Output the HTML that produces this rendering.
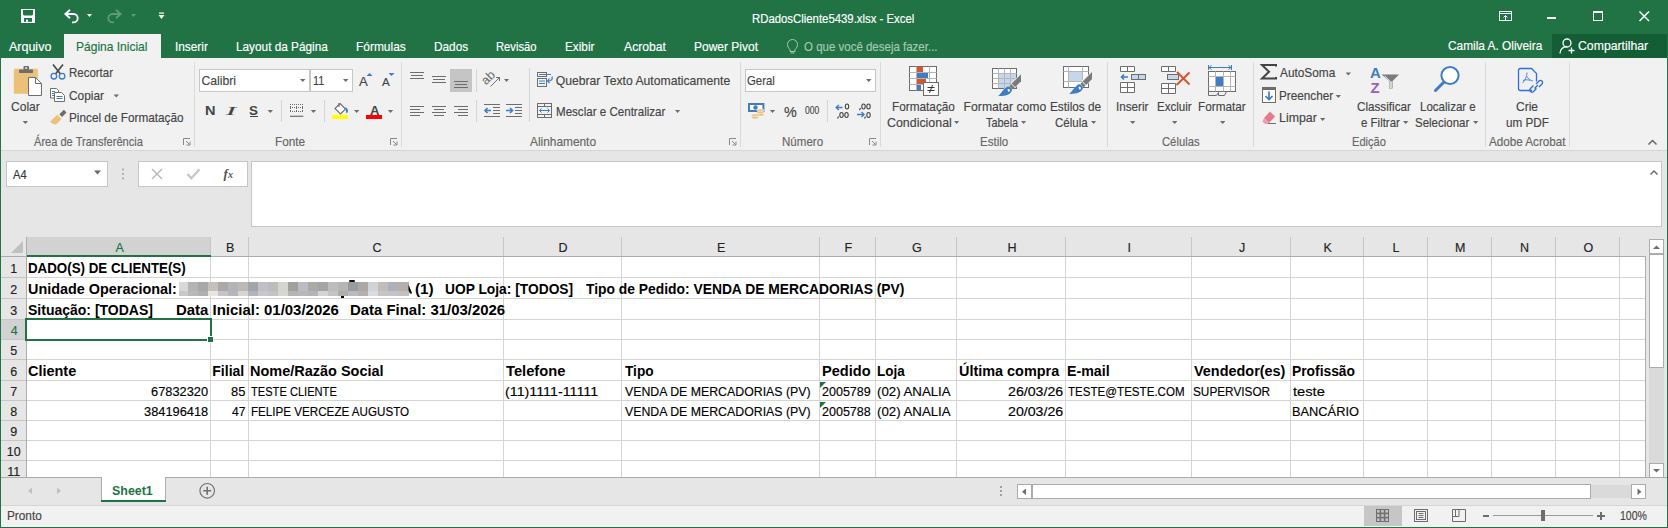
<!DOCTYPE html>
<html><head><meta charset="utf-8"><style>
html,body{margin:0;padding:0;width:1668px;height:528px;overflow:hidden;background:#fff;font-family:"Liberation Sans",sans-serif}
.t{position:absolute;line-height:20px;white-space:pre}
.n{-webkit-text-stroke:0.15px currentColor}
svg{overflow:visible}
</style></head><body>
<div style="position:absolute;left:0px;top:0px;width:1668px;height:58px;background:#217346;"></div>
<div style="position:absolute;left:64px;top:34px;width:97px;height:24px;background:#f1f1f1;"></div>
<div style="position:absolute;left:1552px;top:34px;width:115px;height:24px;background:#135e35;"></div>
<div style="position:absolute;left:0px;top:58px;width:1668px;height:92px;background:#f1f1f1;"></div>
<div style="position:absolute;left:0px;top:150px;width:1668px;height:1px;background:#d5d5d5;"></div>
<div style="position:absolute;left:0px;top:151px;width:1668px;height:86px;background:#e6e6e6;"></div>
<div style="position:absolute;left:6px;top:161px;width:102px;height:26px;background:#fff;box-sizing:border-box;border:1px solid #c6c6c6"></div>
<div style="position:absolute;left:138px;top:161px;width:110px;height:26px;background:#fff;box-sizing:border-box;border:1px solid #c6c6c6"></div>
<div style="position:absolute;left:251px;top:161px;width:1411px;height:66px;background:#fff;box-sizing:border-box;border:1px solid #c6c6c6"></div>
<div style="position:absolute;left:0px;top:237px;width:1668px;height:241px;background:#e6e6e6;"></div>
<div style="position:absolute;left:26px;top:256px;width:1619px;height:221px;background:#fff;"></div>
<div style="position:absolute;left:210px;top:257px;width:1px;height:220px;background:#d4d4d4;"></div>
<div style="position:absolute;left:210px;top:237px;width:1px;height:19px;background:#c6c6c6;"></div>
<div style="position:absolute;left:248px;top:257px;width:1px;height:220px;background:#d4d4d4;"></div>
<div style="position:absolute;left:248px;top:237px;width:1px;height:19px;background:#c6c6c6;"></div>
<div style="position:absolute;left:503px;top:257px;width:1px;height:220px;background:#d4d4d4;"></div>
<div style="position:absolute;left:503px;top:237px;width:1px;height:19px;background:#c6c6c6;"></div>
<div style="position:absolute;left:621px;top:257px;width:1px;height:220px;background:#d4d4d4;"></div>
<div style="position:absolute;left:621px;top:237px;width:1px;height:19px;background:#c6c6c6;"></div>
<div style="position:absolute;left:819px;top:257px;width:1px;height:220px;background:#d4d4d4;"></div>
<div style="position:absolute;left:819px;top:237px;width:1px;height:19px;background:#c6c6c6;"></div>
<div style="position:absolute;left:875px;top:257px;width:1px;height:220px;background:#d4d4d4;"></div>
<div style="position:absolute;left:875px;top:237px;width:1px;height:19px;background:#c6c6c6;"></div>
<div style="position:absolute;left:956px;top:257px;width:1px;height:220px;background:#d4d4d4;"></div>
<div style="position:absolute;left:956px;top:237px;width:1px;height:19px;background:#c6c6c6;"></div>
<div style="position:absolute;left:1065px;top:257px;width:1px;height:220px;background:#d4d4d4;"></div>
<div style="position:absolute;left:1065px;top:237px;width:1px;height:19px;background:#c6c6c6;"></div>
<div style="position:absolute;left:1191px;top:257px;width:1px;height:220px;background:#d4d4d4;"></div>
<div style="position:absolute;left:1191px;top:237px;width:1px;height:19px;background:#c6c6c6;"></div>
<div style="position:absolute;left:1290px;top:257px;width:1px;height:220px;background:#d4d4d4;"></div>
<div style="position:absolute;left:1290px;top:237px;width:1px;height:19px;background:#c6c6c6;"></div>
<div style="position:absolute;left:1363px;top:257px;width:1px;height:220px;background:#d4d4d4;"></div>
<div style="position:absolute;left:1363px;top:237px;width:1px;height:19px;background:#c6c6c6;"></div>
<div style="position:absolute;left:1427px;top:257px;width:1px;height:220px;background:#d4d4d4;"></div>
<div style="position:absolute;left:1427px;top:237px;width:1px;height:19px;background:#c6c6c6;"></div>
<div style="position:absolute;left:1491px;top:257px;width:1px;height:220px;background:#d4d4d4;"></div>
<div style="position:absolute;left:1491px;top:237px;width:1px;height:19px;background:#c6c6c6;"></div>
<div style="position:absolute;left:1555px;top:257px;width:1px;height:220px;background:#d4d4d4;"></div>
<div style="position:absolute;left:1555px;top:237px;width:1px;height:19px;background:#c6c6c6;"></div>
<div style="position:absolute;left:1619px;top:257px;width:1px;height:220px;background:#d4d4d4;"></div>
<div style="position:absolute;left:1619px;top:237px;width:1px;height:19px;background:#c6c6c6;"></div>
<div style="position:absolute;left:27px;top:277px;width:1618px;height:1px;background:#d4d4d4;"></div>
<div style="position:absolute;left:0px;top:277px;width:26px;height:1px;background:#c6c6c6;"></div>
<div style="position:absolute;left:27px;top:298px;width:1618px;height:1px;background:#d4d4d4;"></div>
<div style="position:absolute;left:0px;top:298px;width:26px;height:1px;background:#c6c6c6;"></div>
<div style="position:absolute;left:27px;top:319px;width:1618px;height:1px;background:#d4d4d4;"></div>
<div style="position:absolute;left:0px;top:319px;width:26px;height:1px;background:#c6c6c6;"></div>
<div style="position:absolute;left:27px;top:339px;width:1618px;height:1px;background:#d4d4d4;"></div>
<div style="position:absolute;left:0px;top:339px;width:26px;height:1px;background:#c6c6c6;"></div>
<div style="position:absolute;left:27px;top:359px;width:1618px;height:1px;background:#d4d4d4;"></div>
<div style="position:absolute;left:0px;top:359px;width:26px;height:1px;background:#c6c6c6;"></div>
<div style="position:absolute;left:27px;top:380px;width:1618px;height:1px;background:#d4d4d4;"></div>
<div style="position:absolute;left:0px;top:380px;width:26px;height:1px;background:#c6c6c6;"></div>
<div style="position:absolute;left:27px;top:400px;width:1618px;height:1px;background:#d4d4d4;"></div>
<div style="position:absolute;left:0px;top:400px;width:26px;height:1px;background:#c6c6c6;"></div>
<div style="position:absolute;left:27px;top:420px;width:1618px;height:1px;background:#d4d4d4;"></div>
<div style="position:absolute;left:0px;top:420px;width:26px;height:1px;background:#c6c6c6;"></div>
<div style="position:absolute;left:27px;top:440px;width:1618px;height:1px;background:#d4d4d4;"></div>
<div style="position:absolute;left:0px;top:440px;width:26px;height:1px;background:#c6c6c6;"></div>
<div style="position:absolute;left:27px;top:460px;width:1618px;height:1px;background:#d4d4d4;"></div>
<div style="position:absolute;left:0px;top:460px;width:26px;height:1px;background:#c6c6c6;"></div>
<div style="position:absolute;left:0px;top:256px;width:1645px;height:1px;background:#ababab;"></div>
<div style="position:absolute;left:26px;top:237px;width:1px;height:240px;background:#ababab;"></div>
<div style="position:absolute;left:1645px;top:256px;width:1px;height:222px;background:#ababab;"></div>
<div style="position:absolute;left:27px;top:237px;width:183px;height:18px;background:#d2d2d2;"></div>
<div style="position:absolute;left:27px;top:255px;width:184px;height:2px;background:#217346;"></div>
<div style="position:absolute;left:1px;top:320px;width:25px;height:19px;background:#d2d2d2;"></div>
<div style="position:absolute;left:26px;top:319px;width:1px;height:20px;background:#217346;"></div>
<div style="position:absolute;left:179px;top:282px;width:9px;height:9px;background:#d8d8d8;"></div>
<div style="position:absolute;left:179px;top:291px;width:9px;height:5px;background:#c8c8c8;"></div>
<div style="position:absolute;left:188px;top:282px;width:10px;height:9px;background:#b4b4b4;"></div>
<div style="position:absolute;left:188px;top:291px;width:10px;height:5px;background:#b8b8b8;"></div>
<div style="position:absolute;left:198px;top:282px;width:10px;height:9px;background:#a8a8a8;"></div>
<div style="position:absolute;left:198px;top:291px;width:10px;height:5px;background:#b0b0b0;"></div>
<div style="position:absolute;left:208px;top:282px;width:10px;height:9px;background:#c4c0bc;"></div>
<div style="position:absolute;left:208px;top:291px;width:10px;height:5px;background:#e8e4e0;"></div>
<div style="position:absolute;left:218px;top:282px;width:10px;height:9px;background:#aca8a8;"></div>
<div style="position:absolute;left:218px;top:291px;width:10px;height:5px;background:#c4c4c8;"></div>
<div style="position:absolute;left:228px;top:282px;width:10px;height:9px;background:#b4b4b8;"></div>
<div style="position:absolute;left:228px;top:291px;width:10px;height:5px;background:#b4b8bc;"></div>
<div style="position:absolute;left:238px;top:282px;width:10px;height:9px;background:#bcb8b4;"></div>
<div style="position:absolute;left:238px;top:291px;width:10px;height:5px;background:#d8d4d0;"></div>
<div style="position:absolute;left:248px;top:282px;width:10px;height:9px;background:#a0a4ac;"></div>
<div style="position:absolute;left:248px;top:291px;width:10px;height:5px;background:#b0b4bc;"></div>
<div style="position:absolute;left:258px;top:282px;width:10px;height:9px;background:#c0c0c4;"></div>
<div style="position:absolute;left:258px;top:291px;width:10px;height:5px;background:#c8c8c8;"></div>
<div style="position:absolute;left:268px;top:282px;width:10px;height:9px;background:#bcbcbc;"></div>
<div style="position:absolute;left:268px;top:291px;width:10px;height:5px;background:#c4c4c4;"></div>
<div style="position:absolute;left:278px;top:282px;width:10px;height:9px;background:#d4d4d0;"></div>
<div style="position:absolute;left:278px;top:291px;width:10px;height:5px;background:#d8d4d0;"></div>
<div style="position:absolute;left:288px;top:282px;width:10px;height:9px;background:#a0a09c;"></div>
<div style="position:absolute;left:288px;top:291px;width:10px;height:5px;background:#b4b4b4;"></div>
<div style="position:absolute;left:298px;top:282px;width:10px;height:9px;background:#b8bcc4;"></div>
<div style="position:absolute;left:298px;top:291px;width:10px;height:5px;background:#b8b8bc;"></div>
<div style="position:absolute;left:308px;top:282px;width:10px;height:9px;background:#aca8a4;"></div>
<div style="position:absolute;left:308px;top:291px;width:10px;height:5px;background:#b4b4b8;"></div>
<div style="position:absolute;left:318px;top:282px;width:10px;height:9px;background:#a4a4a8;"></div>
<div style="position:absolute;left:318px;top:291px;width:10px;height:5px;background:#d4d4d4;"></div>
<div style="position:absolute;left:328px;top:282px;width:10px;height:9px;background:#bcbcbc;"></div>
<div style="position:absolute;left:328px;top:291px;width:10px;height:5px;background:#c4c4c4;"></div>
<div style="position:absolute;left:338px;top:282px;width:10px;height:9px;background:#b8b4b4;"></div>
<div style="position:absolute;left:338px;top:291px;width:10px;height:5px;background:#b0aca8;"></div>
<div style="position:absolute;left:348px;top:282px;width:10px;height:9px;background:#989ca0;"></div>
<div style="position:absolute;left:348px;top:291px;width:10px;height:5px;background:#b8bcc0;"></div>
<div style="position:absolute;left:358px;top:282px;width:10px;height:9px;background:#aca8a8;"></div>
<div style="position:absolute;left:358px;top:291px;width:10px;height:5px;background:#b8b0b0;"></div>
<div style="position:absolute;left:368px;top:282px;width:10px;height:9px;background:#d0d4d8;"></div>
<div style="position:absolute;left:368px;top:291px;width:10px;height:5px;background:#d8dce0;"></div>
<div style="position:absolute;left:378px;top:282px;width:10px;height:9px;background:#c4bcb8;"></div>
<div style="position:absolute;left:378px;top:291px;width:10px;height:5px;background:#c8c4c4;"></div>
<div style="position:absolute;left:388px;top:282px;width:10px;height:9px;background:#b0b0b8;"></div>
<div style="position:absolute;left:388px;top:291px;width:10px;height:5px;background:#c4c4c8;"></div>
<div style="position:absolute;left:398px;top:282px;width:11px;height:9px;background:#b4b0ac;"></div>
<div style="position:absolute;left:398px;top:291px;width:11px;height:5px;background:#c4c0c0;"></div>
<svg style="position:absolute;left:405px;top:280px" width="10" height="18" viewBox="0 0 10 18"><path d="M3.5 4.5L7.2 13.5h-2.4L3.5 10z" fill="#000"/></svg>
<div style="position:absolute;left:349px;top:280.3px;width:6px;height:1.7px;background:#111;border-radius:1px"></div>
<div style="position:absolute;left:341px;top:296px;width:3px;height:1.5px;background:#000;"></div>
<svg style="position:absolute;left:820px;top:382px" width="6" height="6" viewBox="0 0 6 6"><path d="M0 0H6L0 6Z" fill="#1e7145"/></svg>
<svg style="position:absolute;left:820px;top:402px" width="6" height="6" viewBox="0 0 6 6"><path d="M0 0H6L0 6Z" fill="#1e7145"/></svg>
<div style="position:absolute;left:25px;top:318px;width:187px;height:2px;background:#217346;"></div>
<div style="position:absolute;left:25px;top:318px;width:2px;height:23px;background:#217346;"></div>
<div style="position:absolute;left:25px;top:339px;width:182px;height:2px;background:#217346;"></div>
<div style="position:absolute;left:210px;top:318px;width:2px;height:18px;background:#217346;"></div>
<div style="position:absolute;left:207px;top:336px;width:7px;height:7px;background:#fff;"></div>
<div style="position:absolute;left:208px;top:337px;width:5px;height:5px;background:#217346;"></div>
<div style="position:absolute;left:250px;top:116px;width:8px;height:1px;background:#444;"></div>
<div style="position:absolute;left:0px;top:477px;width:1668px;height:28px;background:#e6e6e6;"></div>
<div style="position:absolute;left:0px;top:477px;width:1668px;height:1px;background:#ababab;"></div>
<div style="position:absolute;left:0px;top:505px;width:1668px;height:23px;background:#f1f1f1;"></div>
<div style="position:absolute;left:0px;top:505px;width:1668px;height:1px;background:#d5d5d5;"></div>
<div style="position:absolute;left:0px;top:57px;width:1px;height:471px;background:#217346;"></div>
<div style="position:absolute;left:1667px;top:57px;width:1px;height:471px;background:#217346;"></div>
<div style="position:absolute;left:0px;top:527px;width:1668px;height:1px;background:#217346;"></div>
<svg style="position:absolute;left:0;top:0" width="1668" height="528"><rect x="21" y="9" width="14" height="14" fill="#fff"/><path d="M23 10h10v4.5l-1 1h-8l-1-1z" fill="#217346"/><rect x="24" y="18" width="8" height="3.8" fill="#217346"/><rect x="26" y="19.6" width="2" height="2.2" fill="#fff"/><path d="M66 14h7.5a4.2 4.2 0 0 1 0 8.4h-1.5" fill="none" stroke="#fff" stroke-width="1.9"/><path d="M70 9.8l-4.6 4.2 4.6 4.2" fill="none" stroke="#fff" stroke-width="1.9"/><path d="M87 14h5l-2.5 3z" fill="#fff"/><path d="M120 14h-7.5a4.2 4.2 0 0 0 0 8.4h1.5" fill="none" stroke="#5e9a76" stroke-width="1.9"/><path d="M116 9.8l4.6 4.2-4.6 4.2" fill="none" stroke="#5e9a76" stroke-width="1.9"/><path d="M131 14h5l-2.5 3z" fill="#5e9a76"/><rect x="159" y="12.5" width="5" height="1.2" fill="#fff"/><path d="M158.5 15h6l-3.0 4z" fill="#fff"/><rect x="1499.5" y="11.5" width="12" height="9" fill="none" stroke="#fff" stroke-width="1"/><path d="M1499.5 13.5h12" stroke="#fff" stroke-width="1"/><path d="M1505.5 21v-5M1503.5 17.5l2-2 2 2" fill="none" stroke="#fff" stroke-width="1"/><rect x="1547" y="17" width="9" height="2" fill="#fff"/><rect x="1593.5" y="11.5" width="9" height="9" fill="none" stroke="#fff" stroke-width="1"/><rect x="1593" y="11" width="10" height="2" fill="#fff"/><path d="M1639.5 11.5l9.5 9.5M1649 11.5l-9.5 9.5" stroke="#fff" stroke-width="1.5"/><path d="M790 49.5c-1.5-1.5-2.5-3-2.5-5a5 5 0 0 1 10 0c0 2-1 3.5-2.5 5v2h-5z" fill="none" stroke="#a6c9b4" stroke-width="1"/><path d="M790.5 53h4" stroke="#a6c9b4" stroke-width="1"/><circle cx="1567" cy="43" r="4" fill="none" stroke="#fff" stroke-width="1.3"/><path d="M1560 53.5c0-4 3-7 7-7" fill="none" stroke="#fff" stroke-width="1.3"/><path d="M1568.5 50.5h6M1571.5 47.5v6" stroke="#fff" stroke-width="1.3"/><rect x="13.8" y="68.8" width="24" height="25" rx="1" fill="#ebc17a"/><rect x="19" y="69.5" width="14" height="3.5" rx="0.8" fill="#6d6d6d"/><rect x="23.5" y="66" width="5.5" height="4" rx="1" fill="#6d6d6d"/><rect x="25.3" y="67.2" width="1.8" height="1.6" fill="#f3f3f3"/><path d="M28.5 77.5h7l6 6v12h-13z" fill="#fff" stroke="#6d6d6d" stroke-width="1"/><path d="M35.5 77.5v6h6" fill="none" stroke="#6d6d6d" stroke-width="1"/><path d="M53 64.5l7.5 9.5M63 64.5l-7.5 9.5" stroke="#505050" stroke-width="1.8"/><circle cx="53.9" cy="76.2" r="2.8" fill="none" stroke="#3e7cc4" stroke-width="1.3"/><circle cx="62.1" cy="76.2" r="2.8" fill="none" stroke="#3e7cc4" stroke-width="1.3"/><path d="M50.5 88.5h6l2 2v7.5h-8z" fill="#fff" stroke="#6d6d6d" stroke-width="1"/><path d="M54.5 92.5h7l3 3v6h-10z" fill="#fff" stroke="#6d6d6d" stroke-width="1"/><path d="M52 91.5h3M52 93.5h2M52 95.5h2M56.5 96.5h6M56.5 98.5h6" stroke="#3e7cc4" stroke-width="1"/><path d="M59.3 114.2l4.6-4.4 2.6 2.6-4.4 4.6z" fill="#6d6d6d"/><path d="M57.2 114.8l4.3 4.3-5.5 5.4c-2 0-4.5-1.2-6-2.8z" fill="#ebc17a"/><path d="M22.7 121h5.3l-2.65 3z" fill="#6d6d6d"/><path d="M113.6 94.5h5.4l-2.7 3z" fill="#6d6d6d"/><path d="M183.5 145v-6.5h6.5" fill="none" stroke="#888" stroke-width="1"/><path d="M186 141l3.5 3.5M186.5 145h3.5v-3.5" fill="none" stroke="#888" stroke-width="1"/><path d="M390.5 145v-6.5h6.5" fill="none" stroke="#888" stroke-width="1"/><path d="M393 141l3.5 3.5M393.5 145h3.5v-3.5" fill="none" stroke="#888" stroke-width="1"/><path d="M729.5 145v-6.5h6.5" fill="none" stroke="#888" stroke-width="1"/><path d="M732 141l3.5 3.5M732.5 145h3.5v-3.5" fill="none" stroke="#888" stroke-width="1"/><path d="M869.5 145v-6.5h6.5" fill="none" stroke="#888" stroke-width="1"/><path d="M872 141l3.5 3.5M872.5 145h3.5v-3.5" fill="none" stroke="#888" stroke-width="1"/><rect x="199.5" y="69.5" width="110" height="22" fill="#fff" stroke="#c6c6c6" stroke-width="1"/><rect x="310.5" y="69.5" width="42" height="22" fill="#fff" stroke="#c6c6c6" stroke-width="1"/><path d="M300 79h5.5l-2.75 3z" fill="#6d6d6d"/><path d="M343 79h5.5l-2.75 3z" fill="#6d6d6d"/><path d="M369.5 73l3 3h-6z" fill="#3e7cc4"/><path d="M388.5 73h6l-3 3z" fill="#3e7cc4"/><path d="M267.6 110h5.4l-2.7 3z" fill="#6d6d6d"/><path d="M310.8 110h5.4l-2.7 3z" fill="#6d6d6d"/><path d="M354 110h5.4l-2.7 3z" fill="#6d6d6d"/><path d="M387.8 110h5.4l-2.7 3z" fill="#6d6d6d"/><rect x="281" y="100" width="1" height="22" fill="#d5d5d5"/><rect x="324" y="100" width="1" height="22" fill="#d5d5d5"/><rect x="290" y="104" width="1" height="1" fill="#6d6d6d"/><rect x="290" y="111" width="1" height="1" fill="#6d6d6d"/><rect x="292" y="104" width="1" height="1" fill="#6d6d6d"/><rect x="292" y="111" width="1" height="1" fill="#6d6d6d"/><rect x="294" y="104" width="1" height="1" fill="#6d6d6d"/><rect x="294" y="111" width="1" height="1" fill="#6d6d6d"/><rect x="296" y="104" width="1" height="1" fill="#6d6d6d"/><rect x="296" y="111" width="1" height="1" fill="#6d6d6d"/><rect x="298" y="104" width="1" height="1" fill="#6d6d6d"/><rect x="298" y="111" width="1" height="1" fill="#6d6d6d"/><rect x="300" y="104" width="1" height="1" fill="#6d6d6d"/><rect x="300" y="111" width="1" height="1" fill="#6d6d6d"/><rect x="302" y="104" width="1" height="1" fill="#6d6d6d"/><rect x="302" y="111" width="1" height="1" fill="#6d6d6d"/><rect x="290" y="104" width="1" height="1" fill="#6d6d6d"/><rect x="296" y="104" width="1" height="1" fill="#6d6d6d"/><rect x="302" y="104" width="1" height="1" fill="#6d6d6d"/><rect x="290" y="106" width="1" height="1" fill="#6d6d6d"/><rect x="296" y="106" width="1" height="1" fill="#6d6d6d"/><rect x="302" y="106" width="1" height="1" fill="#6d6d6d"/><rect x="290" y="108" width="1" height="1" fill="#6d6d6d"/><rect x="296" y="108" width="1" height="1" fill="#6d6d6d"/><rect x="302" y="108" width="1" height="1" fill="#6d6d6d"/><rect x="290" y="110" width="1" height="1" fill="#6d6d6d"/><rect x="296" y="110" width="1" height="1" fill="#6d6d6d"/><rect x="302" y="110" width="1" height="1" fill="#6d6d6d"/><rect x="290" y="107" width="1" height="1" fill="#6d6d6d"/><rect x="292" y="107" width="1" height="1" fill="#6d6d6d"/><rect x="294" y="107" width="1" height="1" fill="#6d6d6d"/><rect x="296" y="107" width="1" height="1" fill="#6d6d6d"/><rect x="298" y="107" width="1" height="1" fill="#6d6d6d"/><rect x="300" y="107" width="1" height="1" fill="#6d6d6d"/><rect x="302" y="107" width="1" height="1" fill="#6d6d6d"/><rect x="290" y="115.7" width="13.3" height="1.2" fill="#6d6d6d"/><path d="M340 103.5l5.5 5.5-5 5-5.5-5.5z" fill="#fff" stroke="#6d6d6d" stroke-width="1.1"/><path d="M339 103v4" stroke="#6d6d6d" stroke-width="1.2"/><path d="M345.5 107c1.5 1 2.5 2.5 2.5 4c0 1.5-1 2-1.7 2c-0.3-1.5-0.5-3-0.8-6z" fill="#3e7cc4"/><rect x="332" y="115" width="16" height="4" fill="#ffff00"/><rect x="366" y="115" width="16" height="4" fill="#ff0000"/><rect x="410" y="72" width="14" height="1" fill="#6d6d6d"/><rect x="411" y="75" width="12" height="1" fill="#6d6d6d"/><rect x="410" y="78" width="14" height="1" fill="#6d6d6d"/><rect x="432" y="76" width="14" height="1" fill="#6d6d6d"/><rect x="433" y="79" width="12" height="1" fill="#6d6d6d"/><rect x="432" y="82" width="14" height="1" fill="#6d6d6d"/><rect x="450" y="69" width="22" height="23" fill="#c5c5c5"/><rect x="454" y="81" width="14" height="1" fill="#6d6d6d"/><rect x="455" y="84" width="12" height="1" fill="#6d6d6d"/><rect x="454" y="87" width="14" height="1" fill="#6d6d6d"/><rect x="410" y="106" width="14" height="1" fill="#6d6d6d"/><rect x="410" y="109" width="10" height="1" fill="#6d6d6d"/><rect x="410" y="112" width="14" height="1" fill="#6d6d6d"/><rect x="410" y="115" width="10" height="1" fill="#6d6d6d"/><rect x="432" y="106" width="14" height="1" fill="#6d6d6d"/><rect x="434" y="109" width="10" height="1" fill="#6d6d6d"/><rect x="432" y="112" width="14" height="1" fill="#6d6d6d"/><rect x="434" y="115" width="10" height="1" fill="#6d6d6d"/><rect x="454" y="106" width="14" height="1" fill="#6d6d6d"/><rect x="458" y="109" width="10" height="1" fill="#6d6d6d"/><rect x="454" y="112" width="14" height="1" fill="#6d6d6d"/><rect x="458" y="115" width="10" height="1" fill="#6d6d6d"/><rect x="476" y="69" width="1" height="23" fill="#d5d5d5"/><rect x="476" y="100" width="1" height="22" fill="#d5d5d5"/><rect x="529" y="68" width="1" height="54" fill="#d5d5d5"/><text x="0" y="0" transform="translate(486 85.5) rotate(-45)" font-family="Liberation Sans" font-size="12.5" fill="#6d6d6d">ab</text><path d="M490.5 86.5l9-9M496 77.5h3.5v3.5" fill="none" stroke="#6d6d6d" stroke-width="1"/><path d="M504 79h5l-2.5 3z" fill="#6d6d6d"/><rect x="484" y="104" width="16" height="1" fill="#6d6d6d"/><rect x="493" y="107" width="7" height="1" fill="#6d6d6d"/><rect x="493" y="110" width="7" height="1" fill="#6d6d6d"/><rect x="493" y="113" width="7" height="1" fill="#6d6d6d"/><rect x="484" y="116" width="16" height="1" fill="#6d6d6d"/><path d="M491 110.5h-6M487.5 108l-2.5 2.5 2.5 2.5" fill="none" stroke="#3e7cc4" stroke-width="1.6"/><rect x="506" y="104" width="16" height="1" fill="#6d6d6d"/><rect x="515" y="107" width="7" height="1" fill="#6d6d6d"/><rect x="515" y="110" width="7" height="1" fill="#6d6d6d"/><rect x="515" y="113" width="7" height="1" fill="#6d6d6d"/><rect x="506" y="116" width="16" height="1" fill="#6d6d6d"/><path d="M506 110.5h6M510 108l2.5 2.5-2.5 2.5" fill="none" stroke="#3e7cc4" stroke-width="1.6"/><rect x="537.5" y="72.5" width="9" height="4" fill="none" stroke="#6d6d6d" stroke-width="1"/><rect x="537.5" y="78.5" width="9" height="8" fill="none" stroke="#6d6d6d" stroke-width="1"/><path d="M539 74.5h12M539 81h6M539 83.5h6" stroke="#3e7cc4" stroke-width="1"/><path d="M552 76.5c1 3-1 4.5-4 4.5M549.5 78.5l-2 2.5 2 2" fill="none" stroke="#3e7cc4" stroke-width="1.2"/><rect x="537.5" y="103.5" width="14" height="14" fill="none" stroke="#6d6d6d" stroke-width="1"/><path d="M537.5 106.5h14M537.5 114.5h14M544.5 103.5v3M544.5 114.5v3" stroke="#6d6d6d" stroke-width="1"/><path d="M539.5 110.5h10M541.5 108.5l-2 2 2 2M547.5 108.5l2 2-2 2" fill="none" stroke="#3e7cc4" stroke-width="1"/><path d="M675 110h5.2l-2.6 3z" fill="#6d6d6d"/><rect x="745.5" y="69.5" width="130" height="22" fill="#fff" stroke="#c6c6c6" stroke-width="1"/><path d="M866 79h5.5l-2.75 3z" fill="#6d6d6d"/><rect x="749" y="104" width="14.4" height="7" fill="#fff" stroke="#3e7cc4" stroke-width="2"/><circle cx="755.5" cy="107.5" r="2.2" fill="#3e7cc4"/><path d="M748 106h3M748 109h2" stroke="#fff" stroke-width="0"/><ellipse cx="760.5" cy="110.3" rx="3.6" ry="1.4" fill="#ebc17a" stroke="#f3f3f3" stroke-width="0.6"/><ellipse cx="760.5" cy="112.5" rx="3.6" ry="1.4" fill="#ebc17a" stroke="#f3f3f3" stroke-width="0.6"/><ellipse cx="760.5" cy="114.7" rx="3.6" ry="1.4" fill="#ebc17a" stroke="#f3f3f3" stroke-width="0.6"/><ellipse cx="755" cy="115.3" rx="3.6" ry="1.4" fill="#ebc17a" stroke="#f3f3f3" stroke-width="0.6"/><ellipse cx="755" cy="117.6" rx="3.6" ry="1.4" fill="#ebc17a" stroke="#f3f3f3" stroke-width="0.6"/><path d="M769.8 110h5.4l-2.7 3z" fill="#6d6d6d"/><rect x="827" y="100" width="1" height="22" fill="#d5d5d5"/><path d="M842.5 107.5h-6.5M838.8 105l-2.6 2.5 2.6 2.5" fill="none" stroke="#3e7cc4" stroke-width="1.4"/><ellipse cx="847" cy="106.5" rx="1.7" ry="2.5" fill="none" stroke="#444" stroke-width="1.1"/><ellipse cx="841.5" cy="115" rx="1.7" ry="2.5" fill="none" stroke="#444" stroke-width="1.1"/><ellipse cx="846.5" cy="115" rx="1.7" ry="2.5" fill="none" stroke="#444" stroke-width="1.1"/><path d="M838.5 116.5l-1 2" stroke="#444" stroke-width="1.1"/><ellipse cx="863.5" cy="106.5" rx="1.7" ry="2.5" fill="none" stroke="#444" stroke-width="1.1"/><ellipse cx="868.5" cy="106.5" rx="1.7" ry="2.5" fill="none" stroke="#444" stroke-width="1.1"/><path d="M860.5 108l-1 2.2" stroke="#444" stroke-width="1.1"/><ellipse cx="868.5" cy="115" rx="1.7" ry="2.5" fill="none" stroke="#444" stroke-width="1.1"/><path d="M865.5 116.5l-1 2" stroke="#444" stroke-width="1.1"/><path d="M857 114.5h7M861.5 112l2.5 2.5-2.5 2.5" fill="none" stroke="#3e7cc4" stroke-width="1.4"/><rect x="909.5" y="66.5" width="27" height="24" fill="#fff" stroke="#6d6d6d" stroke-width="1"/><path d="M916.5 66.5v24M929.5 66.5v24M909.5 72.5h27M909.5 78.5h27M909.5 84.5h27" stroke="#b5b5b5" stroke-width="1"/><rect x="917" y="67" width="6" height="5" fill="#d9552f"/><rect x="917" y="73" width="11" height="5" fill="#3e7cc4"/><rect x="917" y="79" width="9" height="5" fill="#d9552f"/><rect x="917" y="85" width="4" height="5" fill="#3e7cc4"/><rect x="923.5" y="82.5" width="15" height="13" fill="#fff" stroke="#6d6d6d" stroke-width="1"/><path d="M927.5 87.5h7M927.5 90.5h7M929.5 93l3-8" stroke="#333" stroke-width="1"/><rect x="992.5" y="68.5" width="24" height="20" fill="#fff"/><rect x="998" y="73" width="19" height="16" fill="#c5d7ed"/><rect x="992.5" y="68.5" width="24" height="20" fill="none" stroke="#6d6d6d" stroke-width="1"/><path d="M998.5 68.5v20M1004.5 68.5v20M1010.5 68.5v20M992.5 73.5h24M992.5 78.5h24M992.5 83.5h24" stroke="#b5b5b5" stroke-width="1"/><g transform="translate(0 0)"><path d="M1021.5 73.2v8.3l-6.2 6.2-4.6-4.6z" fill="#f1f1f1"/><path d="M1021 74.2v7l-5.8 5.8-3.5-3.5z" fill="#7a7a7a"/><path d="M1011.2 84.2l3.4 3.4-1.8 1.8-3.4-3.4z" fill="#7a7a7a"/><circle cx="1007.8" cy="91" r="4.2" fill="#fff"/><path d="M998.3 96c3-2.8 5.2-6.8 7.4-8.2a3.4 3.4 0 0 1 5.2 4.6c-1.6 2.2-5.2 3.8-12.6 3.6z" fill="#3e7cc4"/><path d="M1007.6 89.2c1-0.6 2.4 0 2.4 1.2l-1 1.6c-0.6-0.2-1.6-1.6-1.4-2.8z" fill="#fff"/></g><rect x="1063.5" y="66.5" width="25" height="21" fill="#fff" stroke="#6d6d6d" stroke-width="1"/><rect x="1069" y="72" width="14" height="10" fill="#c5d7ed"/><path d="M1068.5 66.5v21M1082.5 66.5v21M1063.5 71.5h25M1063.5 81.5h25" stroke="#b5b5b5" stroke-width="1"/><g transform="translate(71 -2.1)"><path d="M1021.5 73.2v8.3l-6.2 6.2-4.6-4.6z" fill="#f1f1f1"/><path d="M1021 74.2v7l-5.8 5.8-3.5-3.5z" fill="#7a7a7a"/><path d="M1011.2 84.2l3.4 3.4-1.8 1.8-3.4-3.4z" fill="#7a7a7a"/><circle cx="1007.8" cy="91" r="4.2" fill="#fff"/><path d="M998.3 96c3-2.8 5.2-6.8 7.4-8.2a3.4 3.4 0 0 1 5.2 4.6c-1.6 2.2-5.2 3.8-12.6 3.6z" fill="#3e7cc4"/><path d="M1007.6 89.2c1-0.6 2.4 0 2.4 1.2l-1 1.6c-0.6-0.2-1.6-1.6-1.4-2.8z" fill="#fff"/></g><path d="M954 121h5.2l-2.6 3z" fill="#6d6d6d"/><path d="M1021 121h5.2l-2.6 3z" fill="#6d6d6d"/><path d="M1091 121h5.2l-2.6 3z" fill="#6d6d6d"/><path d="M1120.5 66.5h14v5h-14zM1127.5 66.5v5" fill="#fff" stroke="#6d6d6d" stroke-width="1"/><rect x="1131.5" y="74.5" width="14" height="5" fill="#c5d7ed" stroke="#6d6d6d" stroke-width="1"/><path d="M1138.5 74.5v5" stroke="#6d6d6d" stroke-width="1"/><path d="M1128 77h-6M1124 74.5l-2.5 2.5 2.5 2.5" fill="none" stroke="#3e7cc4" stroke-width="1.6"/><path d="M1120.5 82.5h14v10h-14zM1127.5 82.5v10M1120.5 87.5h14" fill="#fff" stroke="#6d6d6d" stroke-width="1"/><path d="M1161.5 66.5h14v5h-14zM1168.5 66.5v5" fill="#fff" stroke="#6d6d6d" stroke-width="1"/><rect x="1167.5" y="74.5" width="11" height="5" fill="#c5d7ed" stroke="#6d6d6d" stroke-width="1"/><path d="M1161.5 83.5h14v10h-14zM1168.5 83.5v10M1161.5 88.5h14" fill="#fff" stroke="#6d6d6d" stroke-width="1"/><path d="M1177 72l12.5 12.5M1189.5 72.5l-13 12.5" stroke="#d9552f" stroke-width="2"/><path d="M1208.5 65v5M1231.5 65v5M1209 67.5h22M1211.5 65.5l-2.5 2 2.5 2M1228.5 65.5l2.5 2-2.5 2" fill="none" stroke="#3e7cc4" stroke-width="1"/><rect x="1208.5" y="71.5" width="27" height="20" fill="#fff" stroke="#6d6d6d" stroke-width="1"/><path d="M1215.5 71.5v20M1223.5 71.5v20M1230.5 71.5v20M1208.5 76.5h27M1208.5 86.5h27" stroke="#b5b5b5" stroke-width="1"/><rect x="1216" y="77" width="7" height="9" fill="#3e7cc4"/><path d="M1208.5 91.5v4h8l2-3M1218.5 92.5v3h6l2-4" fill="none" stroke="#6d6d6d" stroke-width="1"/><path d="M1130 121h5.4l-2.7 3z" fill="#6d6d6d"/><path d="M1172 121h5.4l-2.7 3z" fill="#6d6d6d"/><path d="M1220 121h5.4l-2.7 3z" fill="#6d6d6d"/><path d="M1276 66.5v-1.5h-14l7 6.8-7 6.8h14v-1.5" fill="none" stroke="#444" stroke-width="2"/><rect x="1262.5" y="87.5" width="13" height="15" fill="#fff" stroke="#6d6d6d" stroke-width="1"/><rect x="1262" y="87" width="14" height="3" fill="#6d6d6d"/><path d="M1269 91.5v8M1265.5 96l3.5 3.5 3.5-3.5" fill="none" stroke="#3e7cc4" stroke-width="1.7"/><path d="M1270 111.5l5 5-6 6.5-5-5z" fill="#e37a8e"/><path d="M1264 118l5 5-1 1h-3l-2.5-2.5z" fill="#e8a0ae"/><rect x="1268" y="123" width="8" height="1" fill="#6d6d6d"/><path d="M1345.6 72.5h5.4l-2.7 3z" fill="#6d6d6d"/><path d="M1335.6 95h5.4l-2.7 3z" fill="#6d6d6d"/><path d="M1320 118h5.4l-2.7 3z" fill="#6d6d6d"/><text x="1370" y="78.3" font-family="Liberation Sans" font-weight="700" font-size="15" fill="#3e7cc4">A</text><text x="1370.5" y="92.7" font-family="Liberation Sans" font-weight="700" font-size="15" fill="#9a5fc0">Z</text><path d="M1381.5 74.5h17.5l-6.5 6.5v7.5h-3.5v-7.5z" fill="#7a7a7a"/><path d="M1384.5 75.8l5.5 5.5v6.5h1.2v-6.5" fill="none" stroke="#fff" stroke-width="1"/><circle cx="1450" cy="75.5" r="8.6" fill="#fff" stroke="#3e7cc4" stroke-width="2"/><path d="M1443.5 82.5l-8 8" stroke="#3e7cc4" stroke-width="3" stroke-linecap="round"/><path d="M1403 121h5.4l-2.7 3z" fill="#6d6d6d"/><path d="M1473 121h5.4l-2.7 3z" fill="#6d6d6d"/><path d="M1532 90.5h-11.5a2 2 0 0 1-2-2v-18a2 2 0 0 1 2-2h11l5 5v8" fill="none" stroke="#2f6fdc" stroke-width="1.3"/><path d="M1527 72.5c0 4-2 8-4.5 10.5M1527 76.5c1 2 3 4 6 4.5M1523 80.5c2-1 5-1 7 0" fill="none" stroke="#2f6fdc" stroke-width="0.8"/><path d="M1536 84l3-3a2 2 0 0 1 3 3l-3 3M1536.5 88.5l-3 3a2 2 0 0 1-3-3l3-3M1534.5 88.5l3.5-3.5" fill="none" stroke="#2f6fdc" stroke-width="1.3"/><path d="M1648.5 144.5l4-4 4 4" fill="none" stroke="#666" stroke-width="1.5"/><rect x="194" y="62" width="1" height="85" fill="#dadada"/><rect x="401" y="62" width="1" height="85" fill="#dadada"/><rect x="740" y="62" width="1" height="85" fill="#dadada"/><rect x="880" y="62" width="1" height="85" fill="#dadada"/><rect x="1107" y="62" width="1" height="85" fill="#dadada"/><rect x="1253" y="62" width="1" height="85" fill="#dadada"/><rect x="1485" y="62" width="1" height="85" fill="#dadada"/><rect x="1569" y="62" width="1" height="85" fill="#dadada"/><path d="M94 170.5h7l-3.5 4z" fill="#666"/><rect x="122" y="168.5" width="2" height="2" fill="#b0b0b0"/><rect x="122" y="173" width="2" height="2" fill="#b0b0b0"/><rect x="122" y="177.5" width="2" height="2" fill="#b0b0b0"/><path d="M152 169l10 10M162 169l-10 10" stroke="#b5b5b5" stroke-width="1.3"/><path d="M187.5 174l3.8 4.3 8.2-9" fill="none" stroke="#c8c8c8" stroke-width="2.4"/><text x="223.5" y="177.5" font-family="Liberation Serif" font-style="italic" font-weight="700" font-size="13" fill="#555">f</text><text x="228" y="178" font-family="Liberation Serif" font-style="italic" font-weight="700" font-size="10" fill="#555">x</text><path d="M1650.5 174.5l3.5-3.5 3.5 3.5" fill="none" stroke="#666" stroke-width="1.4"/><path d="M23 241v12h-12z" fill="#c0c0c0"/><rect x="101.5" y="477" width="64" height="25" fill="#fff"/><path d="M101.5 477v25M165.5 477v25" stroke="#ababab" stroke-width="1"/><rect x="101" y="500" width="65" height="2" fill="#217346"/><path d="M32 487.5v6.5l-4-3.25z" fill="#c0c0c0"/><path d="M57 487.5v6.5l4-3.25z" fill="#c0c0c0"/><circle cx="207.2" cy="490.8" r="7.3" fill="none" stroke="#707070" stroke-width="1.1"/><path d="M203.2 490.8h8M207.2 486.8v8" stroke="#707070" stroke-width="1.6"/><rect x="1000" y="486" width="2" height="2" fill="#a0a0a0"/><rect x="1000" y="490" width="2" height="2" fill="#a0a0a0"/><rect x="1000" y="494" width="2" height="2" fill="#a0a0a0"/><rect x="1591" y="485" width="40" height="13" fill="#dadada"/><rect x="1017.5" y="484.5" width="14" height="14" fill="#fff" stroke="#ababab" stroke-width="1"/><rect x="1032.5" y="484.5" width="558" height="14" fill="#fff" stroke="#ababab" stroke-width="1"/><rect x="1631.5" y="484.5" width="14" height="14" fill="#fff" stroke="#ababab" stroke-width="1"/><path d="M1026 488.5v6.5l-4-3.25z" fill="#6d6d6d"/><path d="M1637.5 488.5v6.5l4-3.25z" fill="#6d6d6d"/><rect x="1649" y="239" width="15" height="239" fill="#dadada"/><rect x="1649.5" y="239.5" width="14" height="14" fill="#fff" stroke="#ababab" stroke-width="1"/><rect x="1649.5" y="254.5" width="14" height="113" fill="#fff" stroke="#ababab" stroke-width="1"/><rect x="1649.5" y="463.5" width="14" height="14" fill="#fff" stroke="#ababab" stroke-width="1"/><path d="M1653 249h7l-3.5-3.5z" fill="#6d6d6d"/><path d="M1653 469h7l-3.5 3.5z" fill="#6d6d6d"/><rect x="1364" y="506" width="38" height="20" fill="#c6c6c6"/><rect x="1376.5" y="509.5" width="3.6" height="3.6" fill="none" stroke="#6d6d6d" stroke-width="1"/><rect x="1376.5" y="513.7" width="3.6" height="3.6" fill="none" stroke="#6d6d6d" stroke-width="1"/><rect x="1376.5" y="517.9" width="3.6" height="3.6" fill="none" stroke="#6d6d6d" stroke-width="1"/><rect x="1380.7" y="509.5" width="3.6" height="3.6" fill="none" stroke="#6d6d6d" stroke-width="1"/><rect x="1380.7" y="513.7" width="3.6" height="3.6" fill="none" stroke="#6d6d6d" stroke-width="1"/><rect x="1380.7" y="517.9" width="3.6" height="3.6" fill="none" stroke="#6d6d6d" stroke-width="1"/><rect x="1384.9" y="509.5" width="3.6" height="3.6" fill="none" stroke="#6d6d6d" stroke-width="1"/><rect x="1384.9" y="513.7" width="3.6" height="3.6" fill="none" stroke="#6d6d6d" stroke-width="1"/><rect x="1384.9" y="517.9" width="3.6" height="3.6" fill="none" stroke="#6d6d6d" stroke-width="1"/><rect x="1414.5" y="509.5" width="13" height="12" fill="none" stroke="#6d6d6d" stroke-width="1"/><rect x="1416.5" y="511.5" width="9" height="8" fill="none" stroke="#6d6d6d" stroke-width="1"/><path d="M1418.5 513.5h5M1418.5 515.5h5M1418.5 517.5h5" stroke="#6d6d6d" stroke-width="1"/><path d="M1452.5 509.5h13v12h-13zM1452.5 516.5h6.5v-7M1455.5 509.5v7" fill="none" stroke="#6d6d6d" stroke-width="1"/><rect x="1483" y="515" width="6" height="2" fill="#6d6d6d"/><rect x="1493" y="515" width="100" height="1" fill="#9a9a9a"/><rect x="1541" y="510" width="4" height="11" fill="#6d6d6d"/><path d="M1597 516h8M1601 512v8" stroke="#6d6d6d" stroke-width="2"/></svg>
<div class="t n" style="left:751.65px;top:9.00px;font-size:12px;font-weight:400;color:#fff;transform:scaleX(0.9465);transform-origin:0 0;">RDadosCliente5439.xlsx - Excel</div>
<div class="t n" style="left:9.00px;top:37.00px;font-size:12.2px;font-weight:400;color:#fff;transform:scaleX(1.0244);transform-origin:0 0;">Arquivo</div>
<div class="t n" style="left:76.01px;top:37.00px;font-size:12.2px;font-weight:400;color:#217346;transform:scaleX(0.9859);transform-origin:0 0;">Página Inicial</div>
<div class="t n" style="left:175.03px;top:37.00px;font-size:12.2px;font-weight:400;color:#fff;transform:scaleX(0.9697);transform-origin:0 0;">Inserir</div>
<div class="t n" style="left:236.03px;top:37.00px;font-size:12.2px;font-weight:400;color:#fff;transform:scaleX(0.9681);transform-origin:0 0;">Layout da Página</div>
<div class="t n" style="left:356.02px;top:37.00px;font-size:12.2px;font-weight:400;color:#fff;transform:scaleX(0.9800);transform-origin:0 0;">Fórmulas</div>
<div class="t n" style="left:434.03px;top:37.00px;font-size:12.2px;font-weight:400;color:#fff;transform:scaleX(0.9706);transform-origin:0 0;">Dados</div>
<div class="t n" style="left:496.08px;top:37.00px;font-size:12.2px;font-weight:400;color:#fff;transform:scaleX(0.9186);transform-origin:0 0;">Revisão</div>
<div class="t n" style="left:565.03px;top:37.00px;font-size:12.2px;font-weight:400;color:#fff;transform:scaleX(0.9667);transform-origin:0 0;">Exibir</div>
<div class="t n" style="left:624.00px;top:37.00px;font-size:12.2px;font-weight:400;color:#fff;">Acrobat</div>
<div class="t n" style="left:694.02px;top:37.00px;font-size:12.2px;font-weight:400;color:#fff;transform:scaleX(0.9844);transform-origin:0 0;">Power Pivot</div>
<div class="t n" style="left:804.06px;top:37.00px;font-size:12.2px;font-weight:400;color:#a6c9b4;transform:scaleX(0.9429);transform-origin:0 0;">O que você deseja fazer...</div>
<div class="t n" style="left:1447.63px;top:36.00px;font-size:12.2px;font-weight:400;color:#fff;transform:scaleX(0.9729);transform-origin:0 0;">Camila A. Oliveira</div>
<div class="t n" style="left:1577.59px;top:36.00px;font-size:12.2px;font-weight:400;color:#fff;transform:scaleX(1.0058);transform-origin:0 0;">Compartilhar</div>
<div class="t n" style="left:13.00px;top:165.00px;font-size:12px;font-weight:400;color:#333;transform:scaleX(0.9333);transform-origin:0 0;">A4</div>
<div class="t n" style="left:115.50px;top:238.00px;font-size:12.5px;font-weight:400;color:#217346;">A</div>
<div class="t n" style="left:226.00px;top:238.00px;font-size:12.5px;font-weight:400;color:#222;">B</div>
<div class="t n" style="left:372.50px;top:238.00px;font-size:12.5px;font-weight:400;color:#222;">C</div>
<div class="t n" style="left:558.50px;top:238.00px;font-size:12.5px;font-weight:400;color:#222;">D</div>
<div class="t n" style="left:717.00px;top:238.00px;font-size:12.5px;font-weight:400;color:#222;">E</div>
<div class="t n" style="left:844.50px;top:238.00px;font-size:12.5px;font-weight:400;color:#222;">F</div>
<div class="t n" style="left:912.00px;top:238.00px;font-size:12.5px;font-weight:400;color:#222;">G</div>
<div class="t n" style="left:1007.50px;top:238.00px;font-size:12.5px;font-weight:400;color:#222;">H</div>
<div class="t n" style="left:1127.50px;top:238.00px;font-size:12.5px;font-weight:400;color:#222;">I</div>
<div class="t n" style="left:1239.00px;top:238.00px;font-size:12.5px;font-weight:400;color:#222;">J</div>
<div class="t n" style="left:1323.50px;top:238.00px;font-size:12.5px;font-weight:400;color:#222;">K</div>
<div class="t n" style="left:1392.50px;top:238.00px;font-size:12.5px;font-weight:400;color:#222;">L</div>
<div class="t n" style="left:1455.00px;top:238.00px;font-size:12.5px;font-weight:400;color:#222;">M</div>
<div class="t n" style="left:1520.00px;top:238.00px;font-size:12.5px;font-weight:400;color:#222;">N</div>
<div class="t n" style="left:1583.50px;top:238.00px;font-size:12.5px;font-weight:400;color:#222;">O</div>
<div class="t n" style="left:10.30px;top:259.00px;font-size:12.5px;font-weight:400;color:#222;">1</div>
<div class="t n" style="left:10.30px;top:280.00px;font-size:12.5px;font-weight:400;color:#222;">2</div>
<div class="t n" style="left:10.30px;top:301.00px;font-size:12.5px;font-weight:400;color:#222;">3</div>
<div class="t n" style="left:10.80px;top:321.00px;font-size:12.5px;font-weight:400;color:#217346;">4</div>
<div class="t n" style="left:10.30px;top:341.00px;font-size:12.5px;font-weight:400;color:#222;">5</div>
<div class="t n" style="left:10.30px;top:362.00px;font-size:12.5px;font-weight:400;color:#222;">6</div>
<div class="t n" style="left:10.30px;top:382.00px;font-size:12.5px;font-weight:400;color:#222;">7</div>
<div class="t n" style="left:10.30px;top:402.00px;font-size:12.5px;font-weight:400;color:#222;">8</div>
<div class="t n" style="left:10.30px;top:422.00px;font-size:12.5px;font-weight:400;color:#222;">9</div>
<div class="t n" style="left:6.80px;top:442.00px;font-size:12.5px;font-weight:400;color:#222;">10</div>
<div class="t n" style="left:7.30px;top:462.00px;font-size:12.5px;font-weight:400;color:#222;">11</div>
<div class="t" style="left:28.45px;top:258.00px;font-size:14px;font-weight:700;color:#000;transform:scaleX(0.9518);transform-origin:0 0;">DADO(S) DE CLIENTE(S)</div>
<div class="t" style="left:28.37px;top:279.00px;font-size:14px;font-weight:700;color:#000;transform:scaleX(1.0287);transform-origin:0 0;">Unidade Operacional:</div>
<div class="t" style="left:415.11px;top:279.00px;font-size:14px;font-weight:700;color:#000;transform:scaleX(1.0938);transform-origin:0 0;">(1)</div>
<div class="t" style="left:445.02px;top:279.00px;font-size:14px;font-weight:700;color:#000;transform:scaleX(0.9845);transform-origin:0 0;">UOP Loja: [TODOS]</div>
<div class="t" style="left:586.00px;top:279.00px;font-size:14px;font-weight:700;color:#000;transform:scaleX(0.9888);transform-origin:0 0;">Tipo de Pedido: VENDA DE MERCADORIAS (PV)</div>
<div class="t" style="left:28.00px;top:300.00px;font-size:14px;font-weight:700;color:#000;">Situação: [TODAS]</div>
<div class="t" style="left:176.33px;top:300.00px;font-size:14px;font-weight:700;color:#000;transform:scaleX(1.0675);transform-origin:0 0;">Data Inicial: 01/03/2026</div>
<div class="t" style="left:350.13px;top:300.00px;font-size:14px;font-weight:700;color:#000;transform:scaleX(1.0660);transform-origin:0 0;">Data Final: 31/03/2026</div>
<div class="t" style="left:27.97px;top:361.00px;font-size:14px;font-weight:700;color:#000;transform:scaleX(1.0333);transform-origin:0 0;">Cliente</div>
<div class="t" style="left:212.30px;top:361.00px;font-size:14px;font-weight:700;color:#000;">Filial</div>
<div class="t" style="left:250.37px;top:361.00px;font-size:14px;font-weight:700;color:#000;transform:scaleX(1.0339);transform-origin:0 0;">Nome/Razão Social</div>
<div class="t" style="left:506.00px;top:361.00px;font-size:14px;font-weight:700;color:#000;transform:scaleX(1.0500);transform-origin:0 0;">Telefone</div>
<div class="t" style="left:624.70px;top:361.00px;font-size:14px;font-weight:700;color:#000;transform:scaleX(0.9759);transform-origin:0 0;">Tipo</div>
<div class="t" style="left:821.66px;top:361.00px;font-size:14px;font-weight:700;color:#000;transform:scaleX(1.0422);transform-origin:0 0;">Pedido</div>
<div class="t" style="left:877.44px;top:361.00px;font-size:14px;font-weight:700;color:#000;transform:scaleX(0.9643);transform-origin:0 0;">Loja</div>
<div class="t" style="left:958.57px;top:361.00px;font-size:14px;font-weight:700;color:#000;transform:scaleX(1.0299);transform-origin:0 0;">Última compra</div>
<div class="t" style="left:1067.38px;top:361.00px;font-size:14px;font-weight:700;color:#000;transform:scaleX(1.0150);transform-origin:0 0;">E-mail</div>
<div class="t" style="left:1194.30px;top:361.00px;font-size:14px;font-weight:700;color:#000;transform:scaleX(1.0307);transform-origin:0 0;">Vendedor(es)</div>
<div class="t" style="left:1292.01px;top:361.00px;font-size:14px;font-weight:700;color:#000;transform:scaleX(0.9871);transform-origin:0 0;">Profissão</div>
<div class="t n" style="left:151.05px;top:382.00px;font-size:13.5px;font-weight:400;color:#000;transform:scaleX(0.9492);transform-origin:0 0;">67832320</div>
<div class="t n" style="left:231.04px;top:382.00px;font-size:13.5px;font-weight:400;color:#000;transform:scaleX(0.9571);transform-origin:0 0;">85</div>
<div class="t n" style="left:251.40px;top:382.00px;font-size:13.5px;font-weight:400;color:#000;transform:scaleX(0.8231);transform-origin:0 0;">TESTE CLIENTE</div>
<div class="t n" style="left:504.94px;top:382.00px;font-size:13.5px;font-weight:400;color:#000;transform:scaleX(1.0575);transform-origin:0 0;">(11)1111-11111</div>
<div class="t n" style="left:624.70px;top:382.00px;font-size:13.5px;font-weight:400;color:#000;transform:scaleX(0.9128);transform-origin:0 0;">VENDA DE MERCADORIAS (PV)</div>
<div class="t n" style="left:821.77px;top:382.00px;font-size:13.5px;font-weight:400;color:#000;transform:scaleX(0.9275);transform-origin:0 0;">2005789</div>
<div class="t n" style="left:877.42px;top:382.00px;font-size:13.5px;font-weight:400;color:#000;transform:scaleX(0.9811);transform-origin:0 0;">(02) ANALIA</div>
<div class="t n" style="left:1008.15px;top:382.00px;font-size:13.5px;font-weight:400;color:#000;transform:scaleX(1.0510);transform-origin:0 0;">26/03/26</div>
<div class="t n" style="left:1068.40px;top:382.00px;font-size:13.5px;font-weight:400;color:#000;transform:scaleX(0.8578);transform-origin:0 0;">TESTE@TESTE.COM</div>
<div class="t n" style="left:1193.43px;top:382.00px;font-size:13.5px;font-weight:400;color:#000;transform:scaleX(0.8736);transform-origin:0 0;">SUPERVISOR</div>
<div class="t n" style="left:1293.00px;top:382.00px;font-size:13.5px;font-weight:400;color:#000;transform:scaleX(1.0862);transform-origin:0 0;">teste</div>
<div class="t n" style="left:144.35px;top:402.00px;font-size:13.5px;font-weight:400;color:#000;transform:scaleX(0.9500);transform-origin:0 0;">384196418</div>
<div class="t n" style="left:232.00px;top:402.00px;font-size:13.5px;font-weight:400;color:#000;transform:scaleX(0.8933);transform-origin:0 0;">47</div>
<div class="t n" style="left:250.54px;top:402.00px;font-size:13.5px;font-weight:400;color:#000;transform:scaleX(0.8615);transform-origin:0 0;">FELIPE VERCEZE AUGUSTO</div>
<div class="t n" style="left:624.70px;top:402.00px;font-size:13.5px;font-weight:400;color:#000;transform:scaleX(0.9128);transform-origin:0 0;">VENDA DE MERCADORIAS (PV)</div>
<div class="t n" style="left:821.77px;top:402.00px;font-size:13.5px;font-weight:400;color:#000;transform:scaleX(0.9275);transform-origin:0 0;">2005788</div>
<div class="t n" style="left:877.42px;top:402.00px;font-size:13.5px;font-weight:400;color:#000;transform:scaleX(0.9811);transform-origin:0 0;">(02) ANALIA</div>
<div class="t n" style="left:1008.15px;top:402.00px;font-size:13.5px;font-weight:400;color:#000;transform:scaleX(1.0510);transform-origin:0 0;">20/03/26</div>
<div class="t n" style="left:1292.05px;top:402.00px;font-size:13.5px;font-weight:400;color:#000;transform:scaleX(0.9493);transform-origin:0 0;">BANCÁRIO</div>
<div class="t n" style="left:11.31px;top:97.00px;font-size:12.2px;font-weight:400;color:#444;transform:scaleX(0.9893);transform-origin:0 0;">Colar</div>
<div class="t n" style="left:68.76px;top:63.00px;font-size:12.2px;font-weight:400;color:#444;transform:scaleX(0.9413);transform-origin:0 0;">Recortar</div>
<div class="t n" style="left:68.73px;top:86.00px;font-size:12.2px;font-weight:400;color:#444;transform:scaleX(0.9743);transform-origin:0 0;">Copiar</div>
<div class="t n" style="left:68.73px;top:108.00px;font-size:12.2px;font-weight:400;color:#444;transform:scaleX(0.9667);transform-origin:0 0;">Pincel de Formatação</div>
<div class="t n" style="left:34.00px;top:132.00px;font-size:12.2px;font-weight:400;color:#666;transform:scaleX(0.9083);transform-origin:0 0;">Área de Transferência</div>
<div class="t n" style="left:201.40px;top:71.00px;font-size:12.2px;font-weight:400;color:#444;">Calibri</div>
<div class="t n" style="left:313.00px;top:71.00px;font-size:12.2px;font-weight:400;color:#444;transform:scaleX(0.8955);transform-origin:0 0;">11</div>
<div class="t n" style="left:274.63px;top:132.00px;font-size:12.2px;font-weight:400;color:#666;transform:scaleX(0.9667);transform-origin:0 0;">Fonte</div>
<div class="t n" style="left:555.70px;top:71.00px;font-size:12.2px;font-weight:400;color:#444;">Quebrar Texto Automaticamente</div>
<div class="t n" style="left:555.75px;top:102.00px;font-size:12.2px;font-weight:400;color:#444;transform:scaleX(0.9500);transform-origin:0 0;">Mesclar e Centralizar</div>
<div class="t n" style="left:530.00px;top:132.00px;font-size:12.2px;font-weight:400;color:#666;transform:scaleX(0.9746);transform-origin:0 0;">Alinhamento</div>
<div class="t n" style="left:747.47px;top:71.00px;font-size:12.2px;font-weight:400;color:#444;transform:scaleX(0.9321);transform-origin:0 0;">Geral</div>
<div class="t n" style="left:781.65px;top:132.00px;font-size:12.2px;font-weight:400;color:#666;transform:scaleX(0.9476);transform-origin:0 0;">Número</div>
<div class="t n" style="left:891.73px;top:97.00px;font-size:12.2px;font-weight:400;color:#444;transform:scaleX(0.9672);transform-origin:0 0;">Formatação</div>
<div class="t n" style="left:886.68px;top:113.00px;font-size:12.2px;font-weight:400;color:#444;transform:scaleX(1.0177);transform-origin:0 0;">Condicional</div>
<div class="t n" style="left:963.60px;top:97.00px;font-size:12.2px;font-weight:400;color:#444;">Formatar como</div>
<div class="t n" style="left:985.80px;top:113.00px;font-size:12.2px;font-weight:400;color:#444;transform:scaleX(0.8944);transform-origin:0 0;">Tabela</div>
<div class="t n" style="left:1050.03px;top:97.00px;font-size:12.2px;font-weight:400;color:#444;transform:scaleX(0.9686);transform-origin:0 0;">Estilos de</div>
<div class="t n" style="left:1054.55px;top:113.00px;font-size:12.2px;font-weight:400;color:#444;transform:scaleX(0.9471);transform-origin:0 0;">Célula</div>
<div class="t n" style="left:979.55px;top:132.00px;font-size:12.2px;font-weight:400;color:#666;transform:scaleX(0.9464);transform-origin:0 0;">Estilo</div>
<div class="t n" style="left:1116.44px;top:97.00px;font-size:12.2px;font-weight:400;color:#444;transform:scaleX(0.9576);transform-origin:0 0;">Inserir</div>
<div class="t n" style="left:1156.85px;top:97.00px;font-size:12.2px;font-weight:400;color:#444;transform:scaleX(0.9472);transform-origin:0 0;">Excluir</div>
<div class="t n" style="left:1197.53px;top:97.00px;font-size:12.2px;font-weight:400;color:#444;transform:scaleX(0.9653);transform-origin:0 0;">Formatar</div>
<div class="t n" style="left:1161.58px;top:132.00px;font-size:12.2px;font-weight:400;color:#666;transform:scaleX(0.9231);transform-origin:0 0;">Células</div>
<div class="t n" style="left:1280.30px;top:63.00px;font-size:12.2px;font-weight:400;color:#444;transform:scaleX(0.9702);transform-origin:0 0;">AutoSoma</div>
<div class="t n" style="left:1279.34px;top:86.00px;font-size:12.2px;font-weight:400;color:#444;transform:scaleX(0.9636);transform-origin:0 0;">Preencher</div>
<div class="t n" style="left:1279.28px;top:108.00px;font-size:12.2px;font-weight:400;color:#444;transform:scaleX(1.0167);transform-origin:0 0;">Limpar</div>
<div class="t n" style="left:1357.34px;top:97.00px;font-size:12.2px;font-weight:400;color:#444;transform:scaleX(0.9582);transform-origin:0 0;">Classificar</div>
<div class="t n" style="left:1361.40px;top:113.00px;font-size:12.2px;font-weight:400;color:#444;transform:scaleX(0.9415);transform-origin:0 0;">e Filtrar</div>
<div class="t n" style="left:1419.55px;top:97.00px;font-size:12.2px;font-weight:400;color:#444;transform:scaleX(0.9466);transform-origin:0 0;">Localizar e</div>
<div class="t n" style="left:1415.36px;top:113.00px;font-size:12.2px;font-weight:400;color:#444;transform:scaleX(0.9421);transform-origin:0 0;">Selecionar</div>
<div class="t n" style="left:1351.79px;top:132.00px;font-size:12.2px;font-weight:400;color:#666;transform:scaleX(0.9083);transform-origin:0 0;">Edição</div>
<div class="t n" style="left:1516.31px;top:97.00px;font-size:12.2px;font-weight:400;color:#444;transform:scaleX(0.9857);transform-origin:0 0;">Crie</div>
<div class="t n" style="left:1505.54px;top:113.00px;font-size:12.2px;font-weight:400;color:#444;transform:scaleX(0.9605);transform-origin:0 0;">um PDF</div>
<div class="t n" style="left:1489.00px;top:132.00px;font-size:12.2px;font-weight:400;color:#666;transform:scaleX(0.9575);transform-origin:0 0;">Adobe Acrobat</div>
<div class="t" style="left:204.59px;top:100.60px;font-size:12px;font-weight:700;color:#444;transform:scaleX(1.2143);transform-origin:0 0;">N</div>
<div class="t n" style="left:225.73px;top:100.60px;font-size:13px;font-weight:400;color:#444;font-style:italic;font-family:'Liberation Serif';transform:scaleX(2.2667);transform-origin:0 0;">I</div>
<div class="t" style="left:248.89px;top:100.60px;font-size:12px;font-weight:700;color:#444;transform:scaleX(1.1143);transform-origin:0 0;">S</div>
<div class="t n" style="left:359.30px;top:71.60px;font-size:13px;font-weight:400;color:#444;transform:scaleX(1.0111);transform-origin:0 0;">A</div>
<div class="t n" style="left:382.00px;top:71.60px;font-size:10.5px;font-weight:400;color:#444;transform:scaleX(1.1000);transform-origin:0 0;">A</div>
<div class="t" style="left:369.80px;top:100.60px;font-size:13px;font-weight:700;color:#444;transform:scaleX(1.0111);transform-origin:0 0;">A</div>
<div class="t n" style="left:784.30px;top:102.00px;font-size:14px;font-weight:400;color:#444;transform:scaleX(1.0250);transform-origin:0 0;">%</div>
<div class="t n" style="left:805.00px;top:100.20px;font-size:10.5px;font-weight:400;color:#444;transform:scaleX(0.8118);transform-origin:0 0;">000</div>
<div class="t" style="left:112.41px;top:481.00px;font-size:12.5px;font-weight:700;color:#217346;transform:scaleX(0.9950);transform-origin:0 0;">Sheet1</div>
<div class="t n" style="left:7.33px;top:506.00px;font-size:12.2px;font-weight:400;color:#444;transform:scaleX(0.9686);transform-origin:0 0;">Pronto</div>
<div class="t n" style="left:1619.94px;top:506.00px;font-size:12.2px;font-weight:400;color:#444;transform:scaleX(0.8633);transform-origin:0 0;">100%</div>
</body></html>
